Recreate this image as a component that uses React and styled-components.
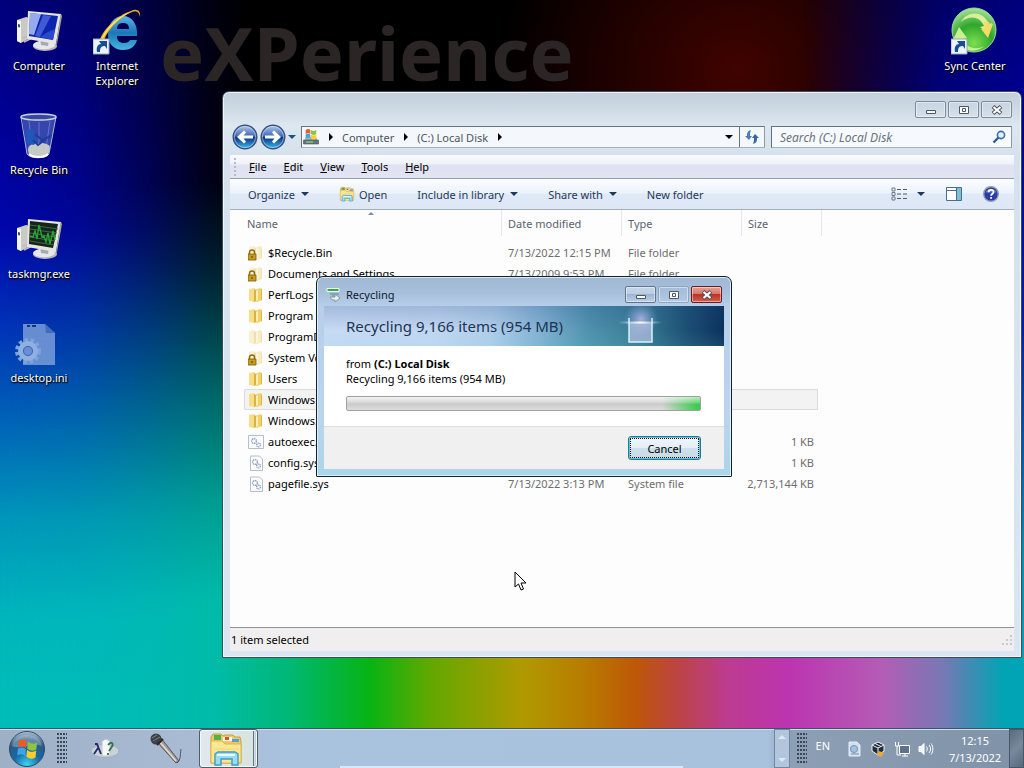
import React from 'react'
import styled, { createGlobalStyle, css } from 'styled-components'

const GlobalStyle = createGlobalStyle`
  * {
    box-sizing: border-box;
  }
  body {
    margin: 0;
    background: #000;
    font-family: 'Noto Sans', 'Open Sans', sans-serif;
    font-size: 11px;
    line-height: 15px;
    color: #000;
  }
  button, input {
    font: inherit;
    color: inherit;
    margin: 0;
    padding: 0;
    border: 0;
    background: none;
  }
  svg {
    display: block;
    flex: none;
  }
`

/* ---------- desktop ---------- */

const Desktop = styled.div`
  position: relative;
  display: flex;
  flex-direction: column;
  min-height: 100vh;
  overflow: hidden;
  background:
    radial-gradient(240px 220px at 72% 70px, #400300, transparent),
    linear-gradient(180deg, #000 0, #000 180px, rgba(0, 0, 0, 0.82) 270px, rgba(0, 0, 0, 0.46) 390px, rgba(0, 0, 0, 0.16) 500px, transparent 600px),
    linear-gradient(90deg, #00bab8 0, #00bca6 21%, #00b878 28%, #06b414 36%, #62a800 42%, #b09a00 51%, #b87c00 57%, #be5808 62%, #bc4440 66%, #bc3c90 71%, #bc34b0 77%, #b45cb6 86%, #7878b4 92%, #00a4b4 98%);

  &::before,
  &::after {
    content: '';
    position: absolute;
    inset: 0;
  }
  &::before {
    background: linear-gradient(180deg, #00007c 0, #000096 120px, #0006ac 230px, #0034b8 330px, #0062b8 420px, #0096ba 520px, #00b6bc 620px, #00bcb8 700px);
    mask-image: linear-gradient(90deg, #000 0, rgba(0, 0, 0, 0.85) 80px, rgba(0, 0, 0, 0.5) 150px, rgba(0, 0, 0, 0.14) 210px, transparent 250px);
  }
  &::after {
    background: linear-gradient(180deg, #00007c 0, #000096 120px, #0020b4 330px, #0096ba 560px, #00a8b8 700px);
    mask-image: linear-gradient(270deg, #000 0, rgba(0, 0, 0, 0.85) 80px, transparent 220px);
    mask-size: 100% 650px;
    mask-repeat: no-repeat;
  }
`

const Workspace = styled.main`
  position: relative;
  z-index: 1;
  flex: 1;
  display: flex;
  justify-content: space-between;
  align-items: flex-start;
  padding-top: 7px;
`

const IconGrid = styled.div`
  display: grid;
  grid-auto-flow: column;
  grid-template-rows: repeat(${p => p.$rows}, 104px);
  grid-auto-columns: 78px;
`

const Shortcut = styled.button`
  display: flex;
  flex-direction: column;
  align-items: center;
  justify-content: flex-start;
  gap: 3px;
  height: 84px;
  width: ${p => p.$width || 78}px;
  padding: 0 ${p => p.$inset || 0}px;
  color: #fff;
  text-shadow: 0 1px 2px #000, 1px 1px 1px #000;
`

const Wordmark = styled.div`
  position: absolute;
  left: 160px;
  top: 15px;
  font-weight: bold;
  font-size: 74px;
  line-height: 76px;
  color: #2b2526;
`

const Pointer = styled.svg`
  position: absolute;
  left: 514px;
  top: 571px;
`

/* ---------- window parts ---------- */

const Window = styled.section`
  position: absolute;
  top: 91px;
  left: 222px;
  right: 2px;
  display: flex;
  flex-direction: column;
  padding: 0 7px 6px;
  border: 1px solid #3e4a58;
  border-radius: 7px 7px 1px 1px;
  box-shadow: inset 0 0 0 1px #eef5fb;
  background: linear-gradient(180deg, #c3d0dc 0, #cbd7e2 14px, #dde7f0 34px, #d5e1ec 64px, #d9e5f0 100%);
`

const TitleBar = styled.header`
  display: flex;
  align-items: flex-start;
  justify-content: flex-end;
  gap: 2px;
  height: 32px;
  padding: 9px 2px 0 0;
`

const CaptionButton = styled.button`
  display: flex;
  align-items: center;
  justify-content: center;
  width: 31px;
  height: 17px;
  border: 1px solid #7c8b9b;
  border-radius: 2px;
  box-shadow: inset 0 0 0 1px rgba(255, 255, 255, 0.45);
  ${p => p.$tone === 'soft' && css`
    border-color: #8fa5c0;
  `}
  ${p => p.$tone === 'active' && css`
    border-color: #61748c;
    background: linear-gradient(180deg, #c6d6e8 0, #b9cce2 50%, #9fb5cf 50%, #b9d0e8 100%);
  `}
  ${p => p.$tone === 'close' && css`
    border-color: #6a1c1c;
    background: linear-gradient(180deg, #e6a093 0, #d6766a 50%, #bb3327 50%, #d4604a 100%);
  `}
`

const NavRow = styled.div`
  display: flex;
  align-items: center;
  gap: 6px;
  height: 26px;
  padding: 0 2px;
`

const Travel = styled.div`
  display: flex;
  align-items: center;
  gap: 2px;
`

const AddressBar = styled.div`
  flex: 1;
  display: flex;
  align-items: center;
  height: 22px;
  margin-left: -1px;
  padding-left: 1px;
  border: 1px solid #66727e;
  border-right-color: #8d99a6;
  border-bottom-color: #a5b0bc;
  background: #f4f8fd;
  color: #4c5560;
`

const Crumb = styled.button`
  margin-left: 9px;
`

const CrumbArrow = styled.span`
  width: 0;
  height: 0;
  margin-left: 10px;
  border: 4px solid transparent;
  border-left: 4px solid #000;
  border-right: 0;
`

const AddressToggle = styled.button`
  margin-left: auto;
`

const RefreshButton = styled.button`
  display: flex;
  align-items: center;
  justify-content: center;
  width: 25px;
  height: 20px;
  margin-left: 6px;
  border-left: 1px solid #66727e;
`

const SearchBox = styled.label`
  display: flex;
  align-items: center;
  width: 241px;
  height: 22px;
  padding: 0 5px 0 8px;
  border: 1px solid #66727e;
  border-right-color: #8d99a6;
  border-bottom-color: #a5b0bc;
  background: #f6f9fe;

  input {
    flex: 1;
    min-width: 0;
    outline: none;
    font-size: 12px;
    font-style: italic;
  }
  input::placeholder {
    color: #6c737c;
    opacity: 1;
  }
`

const MenuBar = styled.nav`
  display: flex;
  align-items: center;
  gap: 17px;
  height: 24px;
  margin-top: 5px;
  padding-left: 4px;
  border-bottom: 1px solid #949db0;
  background: linear-gradient(180deg, #fbfcff 0, #eff1fa 9px, #dfe2f0 10px, #e2e4f2 100%);

  &::before {
    content: '';
    width: 2px;
    height: 18px;
    margin-right: -4px;
    background: repeating-linear-gradient(180deg, #b4bac8 0 2px, transparent 2px 4px);
  }
`

const ToolBar = styled.div`
  display: flex;
  align-items: center;
  gap: 30px;
  height: 31px;
  padding: 0 15px 0 18px;
  border-bottom: 1px solid #a2aec2;
  background: linear-gradient(180deg, #fbfdff 0, #edf3fc 14px, #e0e9f7 15px, #dde7f5 100%);
  color: #1e395b;
`

const ToolButton = styled.button`
  display: flex;
  align-items: center;
  gap: ${p => p.$gap || 4}px;
`

const ToolGroup = styled.div`
  display: flex;
  align-items: center;
  gap: 21px;
  margin-left: auto;
`

const DownArrow = styled.span`
  display: block;
  width: 0;
  height: 0;
  border: 4px solid transparent;
  border-top: 4px solid ${p => p.$color || '#1e395b'};
  border-bottom: 0;
`

const FileArea = styled.div`
  min-height: 417px;
  padding-left: 14px;
  background: #fdfdfd;
`

const FileTable = styled.table`
  table-layout: fixed;
  width: 578px;
  border-collapse: separate;
  border-spacing: 0;
  color: #6d6d6d;
`

const HeadCell = styled.th`
  width: ${p => p.$width}px;
  height: 32px;
  padding: 0;
  vertical-align: top;
  text-align: left;
  font-weight: normal;
  color: #5b6270;
`

const HeadLabel = styled.button`
  position: relative;
  display: block;
  width: 100%;
  height: 26px;
  padding: 1px 0 0 ${p => p.$first ? 3 : 6}px;
  border-right: 1px solid #e4e7ec;
  text-align: left;
`

const SortMark = styled.span`
  position: absolute;
  left: calc(50% - 5px);
  top: 2px;
  border: 3px solid transparent;
  border-bottom: 3px solid #7c8ca0;
  border-top: 0;
`

const Cell = styled.td`
  height: 21px;
  padding: 0 0 0 6px;
  white-space: nowrap;
`

const NameCell = styled(Cell)`
  padding-left: 4px;
  color: #000;
`

const SizeCell = styled(Cell)`
  padding: 0 4px 0 0;
  border-right: 4px solid transparent;
  background-clip: padding-box;
  text-align: right;
`

const FileRow = styled.tr`
  ${p => p.$selected && css`
    td {
      background-color: #f3f3f3;
      box-shadow: inset 0 1px #dcdcdc, inset 0 -1px #dcdcdc;
    }
    td:first-child {
      border-radius: 2px 0 0 2px;
      box-shadow: inset 1px 1px #dcdcdc, inset 0 -1px #dcdcdc;
    }
    td:last-child {
      box-shadow: inset -1px 1px #dcdcdc, inset 0 -1px #dcdcdc;
    }
  `}
`

const FileName = styled.span`
  display: flex;
  align-items: center;
  gap: 4px;
`

const StatusBar = styled.footer`
  display: flex;
  align-items: center;
  justify-content: space-between;
  height: 24px;
  padding: 0 2px 0 1px;
  border-top: 1px solid #8b93a5;
  background: #f0eeee;
`

/* ---------- progress dialog ---------- */

const Dialog = styled.section`
  position: absolute;
  left: 316px;
  top: 276px;
  width: 416px;
  padding: 0 7px 7px;
  border: 1px solid #10222c;
  border-radius: 7px 7px 1px 1px;
  box-shadow: inset 0 0 0 1px rgba(235, 246, 255, 0.8);
  background: linear-gradient(180deg, #9fb8d3 0, #a9c0dc 16px, #b8cfec 30px, #bcd4ee 70%, #a9d6ea 100%);
`

const DialogTitle = styled.header`
  display: flex;
  align-items: center;
  gap: 2px;
  height: 29px;
  padding: 6px 2px 0 2px;
  color: #0c1a30;

  h1 {
    flex: 1;
    margin: 0 0 0 2px;
    font-size: inherit;
    font-weight: normal;
  }
`

const Banner = styled.div`
  display: flex;
  align-items: center;
  justify-content: space-between;
  height: 40px;
  padding: 0 62px 0 22px;
  background:
    linear-gradient(180deg, rgba(20, 60, 120, 0.2), transparent 60%, rgba(120, 230, 230, 0.1)),
    linear-gradient(100deg, #c8daf4 0, #c2d6f2 28%, #b0cdea 42%, #86b4d4 53%, #4f92ae 66%, #357890 80%, #1d5074 90%, #0a2f5a 100%);

  h2 {
    margin: 0;
    font-size: 15px;
    font-weight: normal;
    line-height: 20px;
    color: #1c3454;
  }
`

const DialogBody = styled.div`
  height: 80px;
  padding: 10px 23px 0 22px;
  background: #fff;

  p {
    margin: 0;
  }
`

const Meter = styled.div`
  height: 15px;
  margin-top: 10px;
  border: 1px solid #a0a0a0;
  border-radius: 2px;
  background:
    linear-gradient(180deg, rgba(255, 255, 255, 0.65) 0, rgba(255, 255, 255, 0.2) 6px, transparent 7px),
    linear-gradient(90deg, transparent calc(100% - 38px), #3ecb52 calc(100% - 3px)),
    linear-gradient(180deg, #d8d8d8, #c9c9c9 50%, #dedede);
`

const DialogFooter = styled.div`
  display: flex;
  justify-content: flex-end;
  align-items: center;
  height: 43px;
  padding-right: 23px;
  border-top: 1px solid #dfdfdf;
  background: #f0f0f0;
`

const CancelButton = styled.button`
  width: 73px;
  height: 24px;
  border: 1px solid #2f7391;
  border-radius: 3px;
  box-shadow: inset 0 0 0 1px #55c8ec;
  outline: 1px dotted #111;
  outline-offset: -3px;
  background: linear-gradient(180deg, #f0f6fa 0, #e3eef5 50%, #cfe0eb 50%, #c6dae6 100%);
`

/* ---------- taskbar ---------- */

const Taskbar = styled.footer`
  position: relative;
  z-index: 1;
  display: flex;
  align-items: center;
  height: 40px;
  border-top: 1px solid #3a5468;
  box-shadow: inset 0 1px #cfdbe8;
  background: linear-gradient(90deg, #9eb0c6 0, #aabcd4 20%, #a9c2de 28%, #a8c1dd 75%, #8c9fb5 77%, #8092a8 100%);
`

const StartButton = styled.button`
  margin: 0 11px 0 8px;
`

const Gripper = styled.span`
  width: 10px;
  height: 32px;
  background: radial-gradient(circle at 1px 1px, #3b4858 1px, transparent 1px) 0 0 / 3px 4px;
`

const QuickLaunch = styled.div`
  display: flex;
  align-items: center;
  gap: 29px;
  margin: 0 16px 0 23px;
`

const TaskButton = styled.button`
  display: flex;
  align-items: center;
  justify-content: center;
  width: 59px;
  height: 39px;
  padding-right: 5px;
  border: 1px solid #4b5d6e;
  border-radius: 3px;
  box-shadow: inset 0 0 0 1px #f4f9fd;
  background: linear-gradient(90deg, #e0e8ee 0, #d8e4de 53px, #607488 53px, #607488 54px, #dbe4ee 54px, #a9bacd 100%);
`

const TaskSpace = styled.div`
  flex: 1;
  align-self: flex-end;
  height: 2px;
  margin: 0 91px 0 82px;
  background: #d8e8f6;
`

const Scroller = styled.div`
  display: flex;
  flex-direction: column;
  justify-content: space-between;
  align-items: center;
  width: 16px;
  height: 39px;
  padding: 5px 0;
  border: 1px solid #7188a4;
  background: #b3c5dc;
`

const ScrollButton = styled.button`
  border: 4px solid transparent;
  border-top: 0;
  border-bottom: 4px solid #dce8f4;
  transform: rotate(${p => p.$down ? 180 : 0}deg);
`

const Tray = styled.div`
  display: flex;
  align-items: center;
  gap: 8px;
  margin-left: 7px;
  color: #fff;
`

const Language = styled.button`
  margin: 0 9px 6px 1px;
`

const Clock = styled.time`
  width: 60px;
  margin: 0 4px 0 3px;
  text-align: center;
  line-height: 17px;
`

const ShowDesktop = styled.button`
  width: 15px;
  height: 39px;
  border: 1px solid #46586a;
  background: linear-gradient(135deg, #5a6b7c, #78899b 50%, #56687a);
`

/* ---------- drawings ---------- */

const MonitorIcon = ({ graph }) => (
  <svg width="48" height="48" viewBox="0 0 48 48">
    <path d="M2 13l9-3 4 1v20l-9 5-4-2z" fill="#c9cac6" />
    <path d="M2 13l4 1v22l-4-2z" fill="#f4f4ee" />
    <path d="M3 17l2 .5v3l-2-.5z" fill="#3c5848" />
    <path d="M8 31l10-3M9 35l10-5" stroke="#b9bcc4" strokeWidth="1.500" />
    <ellipse cx="30" cy="39" rx="12" ry="5" fill="#b3b6bb" />
    <ellipse cx="29" cy="38" rx="11" ry="4.4" fill="#e6e7ea" />
    <path d="M25 31l9 2-1 6-7-1z" fill="#a5a9b1" />
    <path d="M13 4l33 3-5 30-29-5z" fill="#e6e6de" />
    <path d="M46 7l-1 3-4 28 1-1 5-28z" fill="#a4a5a3" />
    <path d="M15 6l28 3-5 24-24-4z" fill={graph ? '#15251b' : '#0c24ae'} />
    {graph ? (
      <g fill="none">
        <path d="M15 10l28 4M15 14l27 4M15 18l26 4M15 22l25 4M15 26l24 4" stroke="#3c6a46" />
        <path d="M15 21l3 1 2-6 2 8 2-14 3 12 2-1 2 6 2-9 2 11 3-13 2 9" stroke="#2aa436" strokeWidth="1.400" />
      </g>
    ) : (
      <>
        <path d="M15 6l11 1-7 21-5-1z" fill="#b8ccff" opacity=".8" />
        <path d="M28 8l8 1-11 21-5-1z" fill="#5673e6" opacity=".7" />
        <path d="M25 30l8-5 7-3-2 11z" fill="#3250d6" opacity=".8" />
      </>
    )}
  </svg>
)

const LinkBadge = () => (
  <>
    <path d="M0 32h16v15H0z" fill="#edf2f8" stroke="#96a8bc" />
    <path d="M4 45c-1-5 1-8 4-8l-2-3h8v8l-2-3c-4 0-5 2-5 6z" fill="#174f94" />
  </>
)

const ExplorerIcon = () => (
  <svg width="48" height="48" viewBox="0 0 48 48">
    <defs>
      <linearGradient id="ieBlue" x1="0" y1="0" x2="0" y2="1">
        <stop offset="0" stopColor="#5cb4e4" />
        <stop offset=".5" stopColor="#1a78b8" />
        <stop offset="1" stopColor="#4ab4e0" />
      </linearGradient>
    </defs>
    <path fillRule="evenodd" d="M44 29H24c0 5 3 7 7 7 3 0 5-1 6-3h7c-2 7-7 10-14 10-9 0-15-6-15-16S21 9 30 9s15 8 14 20zM24 22h12c0-4-2-6-6-6s-6 2-6 6z" fill="url(#ieBlue)" />
    <path d="M47 10c1-6-3-9-9-6C24 8 7 25 6 37c0 5 3 8 9 5-6 1-7-3-4-9C16 20 29 9 39 5c5-2 7 0 8 5z" fill="#f0b814" />
    <path d="M38 5C24 9 9 25 8 36 12 23 25 11 38 5z" fill="#fff0a4" />
    <LinkBadge />
  </svg>
)

const SyncIcon = () => (
  <svg width="48" height="48" viewBox="0 0 48 48">
    <defs>
      <radialGradient id="sync" cx=".5" cy=".8" r=".85">
        <stop offset="0" stopColor="#7ce050" />
        <stop offset=".5" stopColor="#2fa62d" />
        <stop offset="1" stopColor="#b6edaa" />
      </radialGradient>
    </defs>
    <circle cx="23" cy="23" r="22" fill="url(#sync)" stroke="#9fdc96" />
    <path d="M10 15C16 4 32 3 38 17l3-1-3 11-9-7 4-1C29 9 18 8 10 15z" fill="#dcec98" />
    <path d="M33 15h5l1 3 3-1-5 14-7-9 4-1z" fill="#f4dc64" />
    <path d="M8 20l8 11-4 1c3 8 11 12 22 7-12 9-24 4-27-7l-5 1z" fill="#c8f090" />
    <LinkBadge />
  </svg>
)

const BinIcon = () => (
  <svg width="48" height="48" viewBox="0 0 48 48">
    <path d="M7 6l5 37c3 5 19 5 22 0l7-37z" fill="#5c74c4" opacity=".6" />
    <path d="M14 10l4 34M24 11v34M35 10l-5 34" stroke="#b8ccf6" opacity=".35" />
    <path d="M13 39c0-5 5-7 12-7s11 2 10 7l-2 5c-4 4-15 4-19 0z" fill="#d4d8c8" opacity=".9" />
    <path d="M12 19l6-1 2 5-3 3 5 2-3 6-8-2 2-6-3-2z" fill="#1f58bc" />
    <path d="M20 23l7 6 11-5M18 29l5 5 8-6" stroke="#1c3f98" strokeWidth="2" fill="none" />
    <path d="M6 6l6 37c3 5 19 5 22 0l7-37" fill="none" stroke="#a6b6dc" />
    <ellipse cx="23.500" cy="6" rx="17.500" ry="3" fill="#39489c" stroke="#c8d2e4" strokeWidth="1.500" />
    <path d="M14 43c4 4 15 4 19 0" fill="none" stroke="#fff" strokeWidth="2" />
  </svg>
)

const IniIcon = () => (
  <svg width="48" height="48" viewBox="0 0 48 48">
    <path d="M8 5h22l10 9v32H8z" fill="#8aa9e0" opacity=".75" />
    <path d="M30 5l1 9h9z" fill="#426db9" />
    <path d="M12 12h16M12 17h24M12 22h24M12 27h24M20 32h16M20 37h16M22 42h14" stroke="#6b8dc9" />
    <path d="M12 7h3M17 7h4" stroke="#18336c" strokeWidth="2" fill="none" />
    <circle cx="13" cy="32" r="11" fill="none" stroke="#7ea4d8" strokeWidth="4" strokeDasharray="3.500 2.500" />
    <circle cx="13" cy="32" r="7.500" fill="none" stroke="#90b0e0" strokeWidth="5" />
    <circle cx="13" cy="32" r="4.600" fill="none" stroke="#3c68b8" />
  </svg>
)

const ArrowOrb = ({ flip }) => (
  <svg width="26" height="26" viewBox="0 0 26 26">
    <defs>
      <linearGradient id="orbBlue" x1="0" y1="0" x2="0" y2="1">
        <stop offset="0" stopColor="#b6cbee" />
        <stop offset=".47" stopColor="#3e67b4" />
        <stop offset=".52" stopColor="#0d2f80" />
        <stop offset="1" stopColor="#38c2f2" />
      </linearGradient>
    </defs>
    <circle cx="13" cy="13" r="11.800" fill="url(#orbBlue)" stroke="#38527e" strokeWidth="1.400" />
    <circle cx="13" cy="13" r="10.600" fill="none" stroke="#d8e6f8" opacity=".55" />
    <path transform={flip ? 'matrix(-1 0 0 1 26 0)' : undefined} d="M5 13l7-6.500 2 2-2.500 3H21v3h-9.500l2.500 3-2 2z" fill="#fff" />
  </svg>
)

const FlagPanes = () => (
  <>
    <path d="M1 3c3-2 5-2 7 0v6C6 7 4 7 1 9z" fill="#ee5a24" />
    <path d="M9 3c3 2 5 2 8 0v6c-3 2-5 2-8 0z" fill="#8cc63e" />
    <path d="M1 10c3-2 5-2 7 0v6c-2-2-4-2-7 0z" fill="#3fa3e4" />
    <path d="M9 10c3 2 5 2 8 0v6c-3 2-5 2-8 0z" fill="#ffcc2a" />
  </>
)

const DriveIcon = () => (
  <svg width="16" height="18" viewBox="0 0 16 18">
    <path d="M3 9h10l2 4H1z" fill="#a8b2b8" />
    <path d="M.5 12h15v4H.5z" fill="#66747e" stroke="#46535c" strokeWidth=".6" />
    <path d="M3 14h7" stroke="#72d67a" strokeWidth="1.400" />
    <g transform="translate(2 0) scale(.66)"><FlagPanes /></g>
  </svg>
)

const StartOrb = () => (
  <svg width="38" height="38" viewBox="0 0 38 38">
    <defs>
      <radialGradient id="start" cx=".5" cy=".95" r=".95">
        <stop offset="0" stopColor="#3ed6f6" />
        <stop offset=".4" stopColor="#1769a6" />
        <stop offset=".75" stopColor="#2c5884" />
        <stop offset="1" stopColor="#b6cadb" />
      </radialGradient>
    </defs>
    <circle cx="19" cy="19" r="17.500" fill="url(#start)" stroke="#294b66" />
    <path d="M4 16C7 1 31 1 34 16 24 12 14 20 4 16z" fill="#fff" opacity=".28" />
    <g transform="translate(9 8) rotate(6 9 9) scale(1.150)"><FlagPanes /></g>
  </svg>
)

const RefreshIcon = () => (
  <svg width="16" height="16" viewBox="0 0 16 16" fill="#4a7cb8">
    <path d="M7 1C3 2 3 5 3 7H1l4 4 3-4H6c0-2 0-4 1-6z" />
    <path d="M9 15c4-1 4-4 4-6h2l-4-4-3 4h2c0 2 0 4-1 6z" fill="#3566a8" />
  </svg>
)

const SearchIcon = () => (
  <svg width="14" height="14" viewBox="0 0 14 14" fill="none">
    <path d="M1.500 12.500l5-5" stroke="#2d5a9e" strokeWidth="2.400" />
    <circle cx="9" cy="5" r="3.600" stroke="#3a6eb4" strokeWidth="1.600" fill="#e0f0fc" />
  </svg>
)

const OpenFolderIcon = ({ size = 16 }) => (
  <svg width={size} height={size} viewBox="0 0 36 36">
    <path d="M3 6l2-3h8l2 2 2-1h8l2 2h5l1 4v22H3z" fill="#ecca66" stroke="#c8a040" />
    <path d="M6 4h7v5H6z" fill="#56b04a" />
    <path d="M15 6h9v4h-9z" fill="#f4f6fa" />
    <path d="M17 6h4v3h-4z" fill="#d6502c" />
    <path d="M24 8h7v3h-7z" fill="#5a9cdc" />
    <path d="M3 10h11l3 3h16v19H3z" fill="#fbe793" stroke="#dcb550" />
    <path d="M6 18h25M6 22h25" stroke="#f2d56c" />
    <path d="M7 34V23l3-2h17l3 2v11h-6v-6H13v6z" fill="#9bdcf2" stroke="#3f9cc4" strokeWidth="1.400" />
    <path d="M9 24h18" stroke="#e8fbff" strokeWidth="2" />
  </svg>
)

const FolderIcon = ({ faded, locked }) => (
  <svg width="16" height="16" viewBox="0 0 16 16">
    <g opacity={faded ? 0.4 : 1}>
      <path d="M1 2l5-1 1 1v12l-1 1-5-1z" fill="#f5df86" />
      <path d="M7 3l5-2 2 1v11l-5 2-2-1z" fill="#efd268" />
      <path d="M6 2l2 1v11l-2 1z" fill="#d9b144" />
      <path d="M8 4l2-1v10l-2 1z" fill="#fbeeb0" />
      <path d="M13 2l1 1v10l-1 .5z" fill="#dcb853" />
    </g>
    {locked && (
      <>
        <path d="M1.500 10V7.500C1.500 4 6.500 4 6.500 7.500V10" fill="none" stroke="#8a6d14" strokeWidth="1.500" />
        <path d="M0 9h8v6H0z" fill="#c89a20" stroke="#7c5c08" strokeWidth=".8" />
        <path d="M4 11v2" stroke="#4e3a04" />
      </>
    )}
  </svg>
)

const GearFileIcon = ({ wide }) => (
  <svg width="16" height="16" viewBox="0 0 16 16" fill="none">
    <path d={wide ? 'M.5 1.500h15v13H.5z' : 'M2.500 1h9l3 3v11.500h-12z'} fill="#fafbfd" stroke="#b4bfcc" />
    <circle cx={wide ? 6 : 7} cy="7" r="2.400" stroke="#8ea0bc" strokeWidth="1.400" strokeDasharray="1.400 .6" />
    <circle cx="10.500" cy="11" r="1.900" stroke="#8296b4" strokeWidth="1.200" strokeDasharray="1.200 .6" />
  </svg>
)

const ViewIcon = () => (
  <svg width="16" height="14" viewBox="0 0 16 14" fill="none">
    <path d="M1 1h3v3H1zM1 5.500h3v3H1zM1 10h3v3H1z" stroke="#6d7a8c" />
    <path d="M6 2.500h4M12 2.500h4M6 7h4M12 7h4M6 11.500h4M12 11.500h4" stroke="#4c5a70" />
  </svg>
)

const PaneIcon = () => (
  <svg width="16" height="14" viewBox="0 0 16 14">
    <path d="M.5.5h15v13H.5z" fill="#fff" stroke="#4c6c8c" />
    <path d="M10 1h5v12h-5z" fill="#7cc0d6" />
    <path d="M1 3.500h9M10.500 1v12" stroke="#4c6c8c" />
  </svg>
)

const HelpIcon = () => (
  <svg width="16" height="16" viewBox="0 0 16 16">
    <circle cx="8" cy="8" r="7.300" fill="#2a3fa4" stroke="#8e9cb4" strokeWidth="1.400" />
    <path d="M2.500 6.500C4 1.500 12 1.500 13.500 6.500z" fill="#7f94e0" opacity=".7" />
    <path d="M5.500 6.300C5.500 3 10.600 3.200 10.500 6c0 1.700-2.400 1.700-2.400 3.700M8.100 11v1.800" fill="none" stroke="#fff" strokeWidth="1.800" />
  </svg>
)

const MinimizeGlyph = () => (
  <svg width="12" height="12" viewBox="0 0 12 12">
    <path d="M1.500 6.500h9v3h-9z" fill="#fff" stroke="#4c5866" />
  </svg>
)

const MaximizeGlyph = () => (
  <svg width="12" height="12" viewBox="0 0 12 12">
    <path d="M1.500 2.500h9v7h-9z" fill="#fff" stroke="#4c5866" />
    <path d="M4.500 4.500h3v3h-3z" fill="none" stroke="#4c5866" />
  </svg>
)

const CloseGlyph = () => (
  <svg width="12" height="12" viewBox="0 0 12 12">
    <path d="M2 2.500l8 7M10 2.500l-8 7" stroke="#4c5058" strokeWidth="4" />
    <path d="M2.500 3l7 6M9.500 3l-7 6" stroke="#fff" strokeWidth="2.200" />
  </svg>
)

const TransferIcon = () => (
  <svg width="16" height="16" viewBox="0 0 16 16">
    <path d="M1 1.500h12v3H1z" fill="#2eb040" stroke="#eafff0" />
    <path d="M4 7h9M6 9h4" stroke="#6f8296" />
    <path d="M4 10h5V7l5 4-5 4v-2H6z" fill="#e9eef2" stroke="#889aa6" />
  </svg>
)

const BannerBin = () => (
  <svg width="44" height="40" viewBox="0 0 44 40">
    <defs>
      <radialGradient id="glow">
        <stop offset="0" stopColor="#cfc2fa" stopOpacity=".75" />
        <stop offset="1" stopColor="#8fa8e0" stopOpacity="0" />
      </radialGradient>
      <linearGradient id="beam">
        <stop offset="0" stopColor="#d8f8ff" stopOpacity="0" />
        <stop offset=".5" stopColor="#fff" />
        <stop offset="1" stopColor="#d8f8ff" stopOpacity="0" />
      </linearGradient>
    </defs>
    <circle cx="23" cy="13" r="17" fill="url(#glow)" />
    <path d="M11 17h23v19H11z" fill="#b9c0e4" opacity=".7" />
    <path d="M11 12v24h23V12" fill="none" stroke="#d3f4fa" strokeWidth="1.500" />
    <path d="M0 15.500h44v2H0z" fill="url(#beam)" />
  </svg>
)

const DiceIcon = () => (
  <svg width="30" height="24" viewBox="0 0 30 24">
    <ellipse cx="15" cy="14" rx="14" ry="6.500" fill="#c8d2da" stroke="#a3b0ba" />
    <path d="M12 4l4-2 4 2v15h-8z" fill="#f6f8f8" stroke="#b8c2c8" />
    <path d="M5 7h2l4 10M8 11l-4 6" stroke="#26266c" strokeWidth="1.800" fill="none" />
    <path d="M18 8c3-4 7-2 3 3l-2 3M18 16v2" stroke="#2f7050" strokeWidth="1.800" fill="none" />
  </svg>
)

const MicIcon = () => (
  <svg width="34" height="34" viewBox="0 0 34 34">
    <path d="M8 10l4-4 18 23-3 2z" fill="#a29c98" stroke="#5b5554" />
    <path d="M10 9l17 20" stroke="#e0dcd8" strokeWidth="1.500" />
    <path d="M28 31c4-3 3-8 4-14" stroke="#4c5460" fill="none" />
    <circle cx="7" cy="7" r="5.500" fill="#3c4146" />
    <path d="M3 6l5-3M4 9l7-4" stroke="#7d8286" />
    <path d="M8 13l6-6" stroke="#29292b" strokeWidth="2" />
  </svg>
)

const NoteIcon = () => (
  <svg width="15" height="16" viewBox="0 0 15 16">
    <path d="M2 1h8l3 3v11H2z" fill="#cfdfee" stroke="#e4ecf4" />
    <circle cx="7" cy="8" r="3.500" fill="#a6c2da" stroke="#6f92b4" />
    <path d="M4 13h8" stroke="#6e91b0" />
  </svg>
)

const BoxIcon = () => (
  <svg width="16" height="16" viewBox="0 0 16 16">
    <path d="M8 1l6 3v6l-6 4-6-4V4z" fill="#1f2c3a" stroke="#eef2f6" />
    <path d="M2 4l6 3 6-3M8 7v7M5 2.500l6 3" stroke="#eef2f6" fill="none" />
    <path d="M9 10l5 2-3 4-4-2z" fill="#edac28" />
  </svg>
)

const NetworkIcon = () => (
  <svg width="16" height="16" viewBox="0 0 16 16" fill="none">
    <path d="M5.500 4.500h10v8h-10z" fill="#5e7186" stroke="#fff" />
    <path d="M8 15h6M11 12v3M1.500 1v4h3V1M3 5v9h4" stroke="#fff" />
  </svg>
)

const SpeakerIcon = () => (
  <svg width="16" height="16" viewBox="0 0 16 16" fill="none">
    <path d="M1 5.500h2l3-3v11l-3-3H1z" fill="#f2f5f8" stroke="#fff" />
    <path d="M8.500 5.500c1 1.500 1 3.500 0 5M11 4c2 2.500 2 5.500 0 8M13 2.500c2.500 3 2.500 8 0 11" stroke="#fff" />
  </svg>
)

/* ---------- content ---------- */

const files = [
  { name: '$Recycle.Bin', date: '7/13/2022 12:15 PM', type: 'File folder', icon: <FolderIcon faded locked /> },
  { name: 'Documents and Settings', date: '7/13/2009 9:53 PM', type: 'File folder', icon: <FolderIcon faded locked /> },
  { name: 'PerfLogs', icon: <FolderIcon /> },
  { name: 'Program Files', icon: <FolderIcon /> },
  { name: 'ProgramData', icon: <FolderIcon faded /> },
  { name: 'System Volume', icon: <FolderIcon faded locked /> },
  { name: 'Users', icon: <FolderIcon /> },
  { name: 'Windows', icon: <FolderIcon />, selected: true },
  { name: 'Windows.old', icon: <FolderIcon /> },
  { name: 'autoexec.bat', size: '1 KB', icon: <GearFileIcon wide /> },
  { name: 'config.sys', size: '1 KB', icon: <GearFileIcon /> },
  { name: 'pagefile.sys', date: '7/13/2022 3:13 PM', type: 'System file', size: '2,713,144 KB', icon: <GearFileIcon /> },
]

const columns = [
  { label: 'Name', width: 258 },
  { label: 'Date modified', width: 120 },
  { label: 'Type', width: 120 },
  { label: 'Size', width: 80 },
]

const Captions = ({ tones = [] }) => (
  <>
    <CaptionButton $tone={tones[0]} aria-label="Minimize"><MinimizeGlyph /></CaptionButton>
    <CaptionButton $tone={tones[1]} aria-label="Maximize"><MaximizeGlyph /></CaptionButton>
    <CaptionButton $tone={tones[2]} aria-label="Close"><CloseGlyph /></CaptionButton>
  </>
)

const FolderWindow = () => (
  <Window>
    <TitleBar><Captions /></TitleBar>
    <NavRow>
      <Travel>
        <button aria-label="Back"><ArrowOrb /></button>
        <button aria-label="Forward"><ArrowOrb flip /></button>
        <button aria-label="Recent pages"><DownArrow $color="#1c4f84" /></button>
      </Travel>
      <AddressBar>
        <DriveIcon />
        <CrumbArrow />
        <Crumb>Computer</Crumb>
        <CrumbArrow />
        <Crumb>(C:) Local Disk</Crumb>
        <CrumbArrow />
        <AddressToggle aria-label="Previous locations"><DownArrow $color="#000" /></AddressToggle>
        <RefreshButton aria-label="Refresh"><RefreshIcon /></RefreshButton>
      </AddressBar>
      <SearchBox>
        <input type="text" aria-label="Search" placeholder="Search (C:) Local Disk" />
        <SearchIcon />
      </SearchBox>
    </NavRow>
    <MenuBar>
      {['File', 'Edit', 'View', 'Tools', 'Help'].map(item => (
        <button key={item}><u>{item[0]}</u>{item.slice(1)}</button>
      ))}
    </MenuBar>
    <ToolBar>
      <ToolButton $gap={6}>Organize <DownArrow /></ToolButton>
      <ToolButton><OpenFolderIcon />Open</ToolButton>
      <ToolButton $gap={6}>Include in library <DownArrow /></ToolButton>
      <ToolButton $gap={6}>Share with <DownArrow /></ToolButton>
      <ToolButton>New folder</ToolButton>
      <ToolGroup>
        <ToolButton $gap={10} aria-label="Change your view"><ViewIcon /><DownArrow /></ToolButton>
        <ToolButton aria-label="Preview pane"><PaneIcon /></ToolButton>
        <ToolButton aria-label="Help"><HelpIcon /></ToolButton>
      </ToolGroup>
    </ToolBar>
    <FileArea>
      <FileTable>
        <thead>
          <tr>
            {columns.map((col, i) => (
              <HeadCell key={col.label} $width={col.width}>
                <HeadLabel $first={i === 0}>
                  {col.label}
                  {i === 0 && <SortMark />}
                </HeadLabel>
              </HeadCell>
            ))}
          </tr>
        </thead>
        <tbody>
          {files.map(file => (
            <FileRow key={file.name} $selected={file.selected}>
              <NameCell><FileName>{file.icon}{file.name}</FileName></NameCell>
              <Cell>{file.date}</Cell>
              <Cell>{file.type}</Cell>
              <SizeCell>{file.size}</SizeCell>
            </FileRow>
          ))}
        </tbody>
      </FileTable>
    </FileArea>
    <StatusBar>
      1 item selected
      <svg width="10" height="10" viewBox="0 0 10 10" fill="#c8ccd2">
        <path d="M8 0h2v2H8zM8 4h2v2H8zM4 4h2v2H4zM8 8h2v2H8zM4 8h2v2H4zM0 8h2v2H0z" />
      </svg>
    </StatusBar>
  </Window>
)

const RecyclingDialog = () => (
  <Dialog role="dialog" aria-labelledby="recycling-title">
    <DialogTitle>
      <TransferIcon />
      <h1 id="recycling-title">Recycling</h1>
      <Captions tones={['active', 'soft', 'close']} />
    </DialogTitle>
    <Banner>
      <h2>Recycling 9,166 items (954 MB)</h2>
      <BannerBin />
    </Banner>
    <DialogBody>
      <p>from <b>(C:) Local Disk</b></p>
      <p>Recycling 9,166 items (954 MB)</p>
      <Meter role="progressbar" aria-label="Recycling progress" />
    </DialogBody>
    <DialogFooter><CancelButton>Cancel</CancelButton></DialogFooter>
  </Dialog>
)

const App = () => {
  return <Desktop>
    <GlobalStyle />
    <Workspace>
      <Wordmark>eXPerience</Wordmark>
      <IconGrid $rows={4}>
        <Shortcut><MonitorIcon />Computer</Shortcut>
        <Shortcut><BinIcon />Recycle Bin</Shortcut>
        <Shortcut><MonitorIcon graph />taskmgr.exe</Shortcut>
        <Shortcut><IniIcon />desktop.ini</Shortcut>
        <Shortcut $inset={12}><ExplorerIcon />Internet Explorer</Shortcut>
      </IconGrid>
      <Shortcut $width={98}><SyncIcon />Sync Center</Shortcut>
      <FolderWindow />
      <RecyclingDialog />
      <Pointer width="13" height="20" viewBox="0 0 13 20">
        <path d="M1 1v15l3.500-3 2.500 6 2.500-1-2.500-6H12z" fill="#fff" stroke="#000" />
      </Pointer>
    </Workspace>
    <Taskbar>
      <StartButton aria-label="Start"><StartOrb /></StartButton>
      <Gripper />
      <QuickLaunch>
        <button aria-label="Language tools"><DiceIcon /></button>
        <button aria-label="Recorder"><MicIcon /></button>
      </QuickLaunch>
      <TaskButton aria-label="Folders"><OpenFolderIcon size={36} /></TaskButton>
      <TaskSpace />
      <Scroller>
        <ScrollButton aria-label="Scroll up" />
        <ScrollButton $down aria-label="Scroll down" />
      </Scroller>
      <Tray>
        <Gripper />
        <Language>EN</Language>
        <NoteIcon />
        <BoxIcon />
        <NetworkIcon />
        <SpeakerIcon />
        <Clock>12:15<br />7/13/2022</Clock>
      </Tray>
      <ShowDesktop aria-label="Show desktop" />
    </Taskbar>
  </Desktop>
}

export default App
